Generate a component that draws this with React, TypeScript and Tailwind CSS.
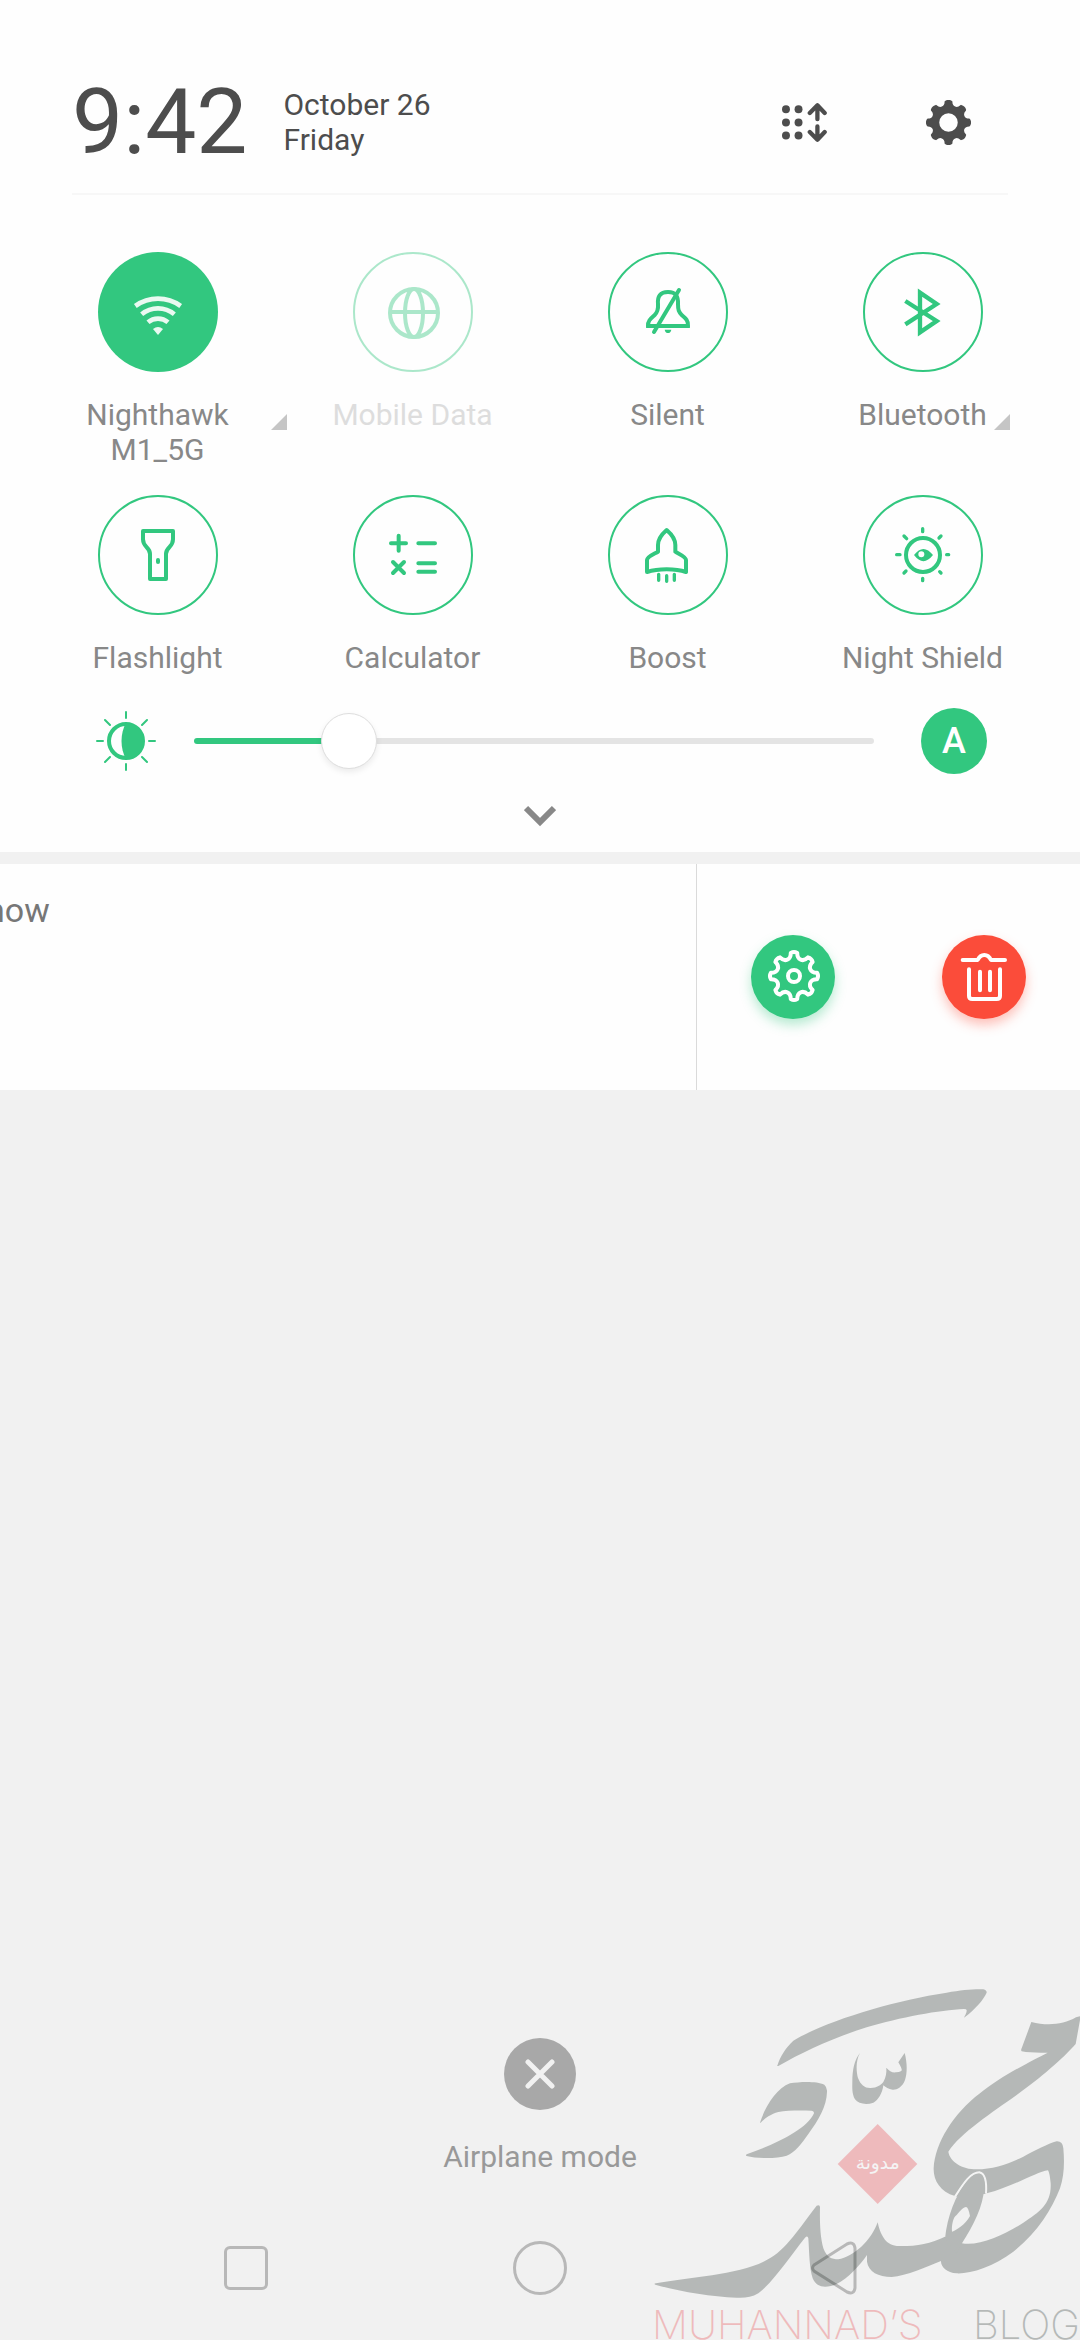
import { useState, type ReactNode } from "react";

/** Outline of a cog wheel with rounded valleys and eight teeth. */
function cogPath(cx: number, cy: number, tip: number, valley: number, halfTooth: number): string {
  const at = (r: number, deg: number) => {
    const a = (deg * Math.PI) / 180;
    return `${(cx + r * Math.cos(a)).toFixed(1)} ${(cy + r * Math.sin(a)).toFixed(1)}`;
  };
  let d = `M${at(tip, -90 - halfTooth)}`;
  for (let i = 0; i < 8; i++) {
    const a = -90 + i * 45;
    d += ` Q${at(tip + 5, a)} ${at(tip, a + halfTooth)}`;
    d += ` C${at(valley, a + halfTooth + 3)} ${at(valley, a + 42 - halfTooth)} ${at(tip, a + 45 - halfTooth)}`;
  }
  return d + "Z";
}

type IconProps = { viewBox: string; children: ReactNode; className?: string };

function Icon({ viewBox, children, className = "size-[60px]" }: IconProps) {
  return (
    <svg
      viewBox={viewBox}
      className={className}
      fill="none"
      stroke="currentColor"
      strokeWidth={12}
      aria-hidden="true"
    >
      {children}
    </svg>
  );
}

const WifiIcon = (
  <Icon viewBox="201 150 180 180">
    <g strokeWidth={14}>
      <path d="M223 222A116 116 0 0 1 359 222" />
      <path d="M242 247A76 76 0 0 1 340 247" />
      <path d="M261 271A46 46 0 0 1 321 271" />
    </g>
    <path stroke="none" fill="currentColor" d="M276 291Q291 279 306 291L291 309Z" />
  </Icon>
);

const GlobeIcon = (
  <Icon viewBox="966 156 180 180">
    <circle cx="1059" cy="249" r="72" />
    <ellipse cx="1059" cy="249" rx="27" ry="72" />
    <path d="M987 246H1131" />
  </Icon>
);

const SilentIcon = (
  <Icon viewBox="174 156 180 180">
    <path d="M204 288C203 272 213 265 224 255C233 246 235 235 234 222C232 200 240 186 264 186C288 186 295 200 294 222C294 240 296 246 306 256C318 266 325 272 324 288Z" />
    <path d="M297 180L222 306" strokeLinecap="round" />
    <path stroke="none" fill="currentColor" d="M254 299H274Q272 309 264 309Q256 309 254 299Z" />
  </Icon>
);

const BluetoothIcon = (
  <Icon viewBox="939 156 180 180">
    <path d="M976 213L1070 273L1020 307V188L1070 222L976 283" strokeWidth={13} />
  </Icon>
);

const FlashlightIcon = (
  <Icon viewBox="204 135 180 180">
    <path
      strokeLinejoin="round"
      d="M249 153H339V178C339 203 318 200 318 222V297H270V222C270 200 249 203 249 178Z"
    />
    <rect x="288" y="234" width="12" height="18" rx="6" fill="currentColor" stroke="none" />
  </Icon>
);

const CalculatorIcon = (
  <Icon viewBox="969 135 180 180">
    <path
      strokeLinecap="round"
      d="M993 190H1038M1016 167V212M1075 190H1125M999 246L1032 279M1032 246L999 279M1075 250H1125M1075 275H1125"
    />
  </Icon>
);

const BoostIcon = (
  <Icon viewBox="174 135 180 180">
    <path
      strokeLinejoin="round"
      d="M260 150C245 163 234 176 234 195V215C222 222 201 230 201 240V276C220 270 240 268 260 268C280 268 300 270 318 276V240C318 230 296 222 286 215V195C286 176 275 163 260 150Z"
    />
    <path strokeWidth={10} strokeLinecap="round" d="M236 283V301M260 287V304M283 283V301" />
  </Icon>
);

const NightShieldIcon = (
  <Icon viewBox="939 135 180 180">
    <circle cx="1029" cy="225" r="51" />
    <path
      stroke="none"
      fill="currentColor"
      fillRule="evenodd"
      d="M1002 225Q1030 189 1059 225Q1030 262 1002 225ZM1033 223A9 9 0 1 0 1015 223A9 9 0 1 0 1033 223Z"
    />
    <path
      strokeWidth={10}
      strokeLinecap="round"
      d="M1028 146V155M1028 295V302M950 224H960M1100 224H1106M972 168L980 176M1083 168L1077 174M972 279L978 273M1083 279L1079 275"
    />
  </Icon>
);

type Tile = {
  label: string;
  icon: ReactNode;
  active?: boolean;
  disabled?: boolean;
  expandable?: boolean;
};

const tiles: Tile[] = [
  { label: "Nighthawk M1_5G", icon: WifiIcon, active: true, expandable: true },
  { label: "Mobile Data", icon: GlobeIcon, disabled: true },
  { label: "Silent", icon: SilentIcon },
  { label: "Bluetooth", icon: BluetoothIcon, expandable: true },
  { label: "Flashlight", icon: FlashlightIcon },
  { label: "Calculator", icon: CalculatorIcon },
  { label: "Boost", icon: BoostIcon },
  { label: "Night Shield", icon: NightShieldIcon },
];

function QuickTile({ label, icon, active, disabled, expandable }: Tile) {
  const circle = active
    ? "bg-[#32c77f] text-[#eaf9f1]"
    : disabled
      ? "border-2 border-[#32c77f] text-[#32c77f] opacity-40"
      : "border-2 border-[#32c77f] text-[#32c77f]";
  return (
    <button
      type="button"
      disabled={disabled}
      aria-pressed={!!active}
      className="flex flex-col items-center justify-start gap-[25px]"
    >
      <span className={`flex size-[120px] items-center justify-center rounded-full ${circle}`}>{icon}</span>
      <span
        className={`relative max-w-[212px] text-center text-[30px] leading-[35px] ${
          disabled ? "text-[#dddddd]" : "text-[#888888]"
        }`}
      >
        {label}
        {expandable && (
          <svg viewBox="0 0 16 16" className="absolute top-[17px] left-full ml-[7px] size-4" aria-hidden="true">
            <path d="M16 0V16H0Z" fill="#c5c5c5" />
          </svg>
        )}
      </span>
    </button>
  );
}

function Header() {
  return (
    <header className="mx-[72px] flex items-center border-b-2 border-[#f7f7f7] pt-[69px] pb-[18px] text-[#4d4d4d]">
      <time className="text-[91px] leading-[106px]">9:42</time>
      <div className="ml-[36px] text-[30px] leading-[35px]">
        <p>October 26</p>
        <p>Friday</p>
      </div>
      <div className="ml-auto flex gap-6">
        <button type="button" aria-label="Arrange tiles" className="flex h-16 w-[120px] items-center justify-center">
          <Icon viewBox="243 119 136 136" className="size-[45px]">
            <g fill="currentColor" stroke="none">
              <circle cx="255" cy="147" r="12" />
              <circle cx="293" cy="147" r="12" />
              <circle cx="255" cy="187" r="12" />
              <circle cx="293" cy="187" r="12" />
              <circle cx="255" cy="226" r="12" />
              <circle cx="293" cy="226" r="12" />
            </g>
            <path
              strokeWidth={13}
              strokeLinecap="round"
              strokeLinejoin="round"
              d="M350 136V177M327 158L350 135L372 158M350 199V239M327 216L350 239L372 216"
            />
          </Icon>
        </button>
        <button type="button" aria-label="Settings" className="flex h-16 w-[120px] items-center justify-center">
          <Icon viewBox="674 119 136 136" className="size-[45px]">
            <path
              fill="currentColor"
              fillRule="evenodd"
              strokeWidth={6}
              strokeLinejoin="round"
              d={cogPath(742, 187, 63, 46, 8) + "M773 187A31 31 0 1 0 711 187A31 31 0 1 0 773 187Z"}
            />
          </Icon>
        </button>
      </div>
    </header>
  );
}

function Brightness() {
  const [value, setValue] = useState(52);
  const share = value / 255;
  const filled = `calc(28px + (100% - 56px) * ${share})`;
  return (
    <div className="mt-[33px] flex items-center pr-[93px] pl-24">
      <svg viewBox="0 0 60 60" className="size-[60px] text-[#32c77f]" fill="none" stroke="currentColor" aria-hidden="true">
        <circle cx="30" cy="30" r="17" strokeWidth="4" />
        <path stroke="none" fill="currentColor" d="M30 12A18 18 0 0 1 30 48C24 38 24 22 30 12Z" />
        <path
          strokeWidth="2"
          strokeLinecap="round"
          d="M30 1V7M30 53V59M1 30H7M53 30H59M9 9L14 14M51 9L46 14M9 51L14 46M51 51L46 46"
        />
      </svg>
      <input
        type="range"
        aria-label="Brightness"
        min={0}
        max={255}
        value={value}
        onChange={(e) => setValue(Number(e.target.value))}
        style={{ backgroundImage: `linear-gradient(to right, #32c77f ${filled}, #e4e4e4 ${filled})` }}
        className="mr-[47px] ml-[38px] h-[6px] min-w-0 flex-1 appearance-none rounded-full [&::-webkit-slider-thumb]:size-[56px] [&::-webkit-slider-thumb]:appearance-none [&::-webkit-slider-thumb]:rounded-full [&::-webkit-slider-thumb]:border [&::-webkit-slider-thumb]:border-[#dedede] [&::-webkit-slider-thumb]:bg-white [&::-webkit-slider-thumb]:shadow-[0_3px_6px_rgba(0,0,0,0.08)]"
      />
      <button
        type="button"
        aria-label="Automatic brightness"
        className="flex size-[66px] items-center justify-center rounded-full bg-[#32c77f] text-[36px] leading-[36px] font-medium text-white"
      >
        A
      </button>
    </div>
  );
}

function Notification() {
  return (
    <section className="mt-3 flex h-[226px] bg-[#fefefe]">
      <div className="flex-1 overflow-hidden border-r border-[#dadada] pt-[26px]">
        <p className="-ml-[14px] text-[34px] leading-[40px] text-[#777777]">now</p>
      </div>
      <div className="flex w-[383px] items-center justify-around">
        <button
          type="button"
          aria-label="Notification settings"
          className="flex size-[84px] items-center justify-center rounded-full bg-[#32c77f] text-white shadow-[0_6px_12px_rgba(50,199,127,0.35)]"
        >
          <Icon viewBox="366 771 180 180">
            <path strokeLinejoin="round" d={cogPath(459, 858, 70, 49, 8)} />
            <circle cx="459" cy="858" r="18" />
          </Icon>
        </button>
        <button
          type="button"
          aria-label="Delete notification"
          className="flex size-[84px] items-center justify-center rounded-full bg-[#fb4c3a] text-white shadow-[0_6px_12px_rgba(251,76,58,0.35)]"
        >
          <Icon viewBox="942 771 180 180">
            <path
              strokeLinecap="round"
              strokeLinejoin="round"
              d="M968 810H1013Q1020 795 1033 795Q1046 795 1053 810H1095M987 838V918Q987 927 997 927H1070Q1080 927 1080 918V838M1020 845V901M1050 845V901"
            />
          </Icon>
        </button>
      </div>
    </section>
  );
}

function NavBar() {
  return (
    <nav className="mt-[67px] grid grid-cols-3 items-center justify-items-center px-[99px] pb-[45px] text-[#b8b8b8]">
      <button type="button" aria-label="Recent apps" className="size-[44px] rounded-md border-3 border-current" />
      <button type="button" aria-label="Home" className="size-[54px] rounded-full border-3 border-current" />
      <button type="button" aria-label="Back">
        <svg viewBox="0 0 54 54" className="size-[54px]" fill="none" stroke="currentColor" strokeWidth="3" aria-hidden="true">
          <path d="M7 24L40 3Q47 0 48 7V47Q47 54 40 51L7 30Q4 27 7 24Z" />
        </svg>
      </button>
    </nav>
  );
}

function Watermark() {
  return (
    <div className="pointer-events-none absolute right-0 bottom-0 h-[370px] w-[440px] overflow-hidden opacity-25">
      <svg viewBox="0 0 1320 1110" className="absolute inset-0 size-full" role="img" aria-label="Blog logo">
        <g fill="#05140d">
          <path d="M411 287L413 284C420 262 435 235 460 212C560 152 760 92 920 68C965 60 1000 57 1030 58Q1040 60 1040 68C1030 90 1005 118 976 140L972 143C974 138 981 128 980 121Q980 117 972 117C900 120 780 142 680 172C580 203 490 245 415 288Z" />
          <path d="M360 458C375 410 410 355 450 340C480 335 530 333 553 344Q562 352 561 365C560 410 535 450 505 492C485 520 465 548 440 557C410 567 350 566 320 558Q315 555 322 552C400 525 500 480 522 430Q522 422 514 422C480 421 440 421 415 426C390 433 375 445 362 458Z" />
          <path d="M660 249C645 275 650 310 654 324C662 345 675 355 692 354C712 353 722 346 730 336C738 322 740 308 739 293C748 303 755 308 768 307Q788 306 785 298C783 290 778 283 775 277L794 249C802 280 802 310 795 330C787 352 770 360 758 359C745 357 738 352 730 346C727 370 715 390 700 398C680 405 655 402 645 388C635 370 637 350 637 335C637 300 643 270 660 249Z" />
          <path d="M1174 156C1220 168 1270 165 1308 142L1320 139V150L1307 222C1270 265 1200 325 1130 375C1060 425 960 490 925 545C930 575 965 598 1010 598C1060 598 1110 580 1150 560C1180 545 1225 520 1250 514Q1268 513 1270 535C1274 580 1272 620 1260 655C1235 720 1190 790 1120 845C1060 890 990 912 950 910C920 908 902 890 903 873C860 890 800 918 755 921C715 921 685 905 681 875V855C660 885 625 925 590 942C560 955 530 955 518 925C508 895 508 850 505 805Q503 795 495 803C450 860 400 935 355 970C335 982 315 984 290 983C210 980 120 965 46 944Q40 941 48 940C150 920 300 915 380 870C440 840 480 770 530 707Q540 703 540 712C539 750 540 800 550 835C560 862 575 868 595 868C640 862 695 810 713 757C720 790 735 825 770 828C820 830 870 822 915 800L966 820C1020 830 1100 790 1150 758C1200 725 1235 700 1232 640C1230 620 1228 608 1224 601C1190 605 1120 650 1040 670L945 678C900 665 880 630 881 595C885 520 940 430 1020 370C1080 320 1180 270 1223 248C1195 249 1165 248 1145 244Q1142 240 1145 235Z" />
          <path
            stroke="#ffffff"
            strokeWidth="6"
            d="M945 680C968 645 990 607 1018 607Q1042 612 1038 671"
          />
          <path d="M915 806C922 740 945 675 985 630Q1005 608 1022 612Q1034 620 1033 650C1030 710 1000 765 966 820L950 850Z" />
        </g>
        <path fill="#f1f1f1" d="M978 711Q985 711 990 738C975 765 950 780 936 785C934 765 940 740 950 735C960 722 970 712 978 711Z" />
        <path fill="#e81c24" d="M713 462L832 582L713 702L593 582Z" />
        <text
          x="713"
          y="596"
          textAnchor="middle"
          fill="#ffffff"
          fontSize="56"
          fontWeight="400"
          fontFamily="'DejaVu Sans', sans-serif"
        >
          مدونة
        </text>
      </svg>
      <p className="absolute right-0 bottom-0 left-3 flex justify-between font-['Inter'] text-[40px] leading-[30px] font-extralight">
        <span className="text-[#e81c24]">MUHANNAD’S</span>
        <span className="text-[#05140d]">BLOG</span>
      </p>
    </div>
  );
}

export default function App() {
  return (
    <div className="relative flex min-h-screen flex-col overflow-hidden bg-[#f1f1f1] font-['Roboto',sans-serif]">
      <section className="bg-[#fefefe] pb-[11px]">
        <Header />
        <div className="mx-[30px] mt-[57px] grid grid-cols-4 gap-y-7">
          {tiles.map((tile) => (
            <QuickTile key={tile.label} {...tile} />
          ))}
        </div>
        <Brightness />
        <button type="button" aria-label="Expand panel" className="mx-auto mt-[17px] flex h-[50px] items-center">
          <svg viewBox="0 0 32 22" className="h-[22px] w-8" fill="none" stroke="#888888" strokeWidth="6" aria-hidden="true">
            <path d="M2 3L16 17L30 3" />
          </svg>
        </button>
      </section>
      <Notification />
      <div className="flex-1" />
      <button type="button" className="mx-auto flex flex-col items-center gap-[29px]">
        <span className="flex size-[72px] items-center justify-center rounded-full bg-[#a8a8a8] text-[#f1f1f1]">
          <svg viewBox="0 0 30 30" className="size-[30px]" stroke="currentColor" strokeWidth="5" strokeLinecap="round" aria-hidden="true">
            <path d="M3 3L27 27M27 3L3 27" />
          </svg>
        </span>
        <span className="text-[30px] leading-[35px] text-[#999999]">Airplane mode</span>
      </button>
      <NavBar />
      <Watermark />
    </div>
  );
}
